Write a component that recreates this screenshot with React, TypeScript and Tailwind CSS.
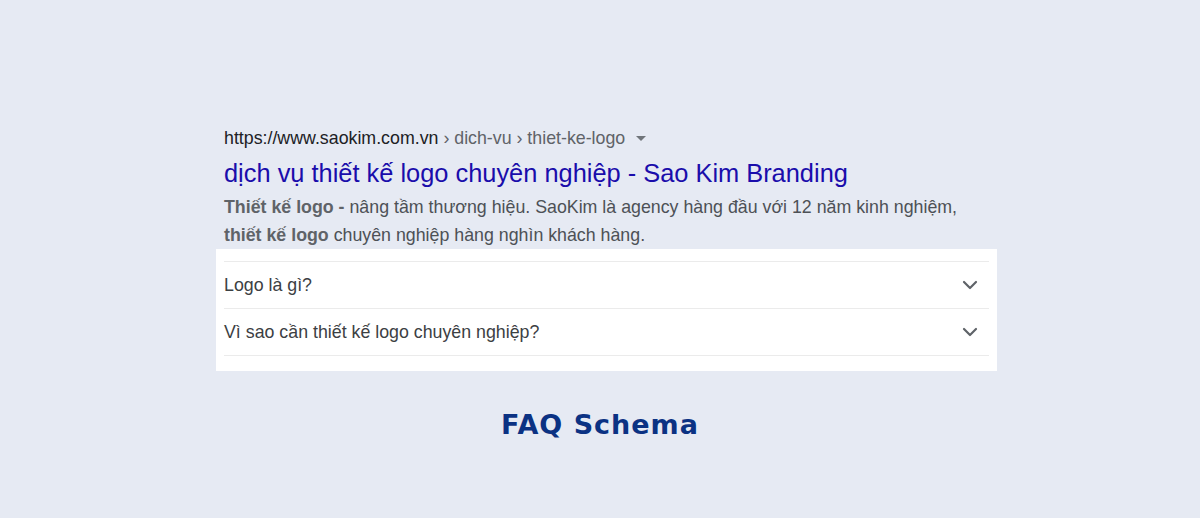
import { ChevronDown } from "lucide-react";

const faqs = ["Logo là gì?", "Vì sao cần thiết kế logo chuyên nghiệp?"];

export default function App() {
  return (
    <div className="flex h-[518px] w-[1200px] flex-col bg-[#e6eaf3] font-['Liberation_Sans',Arial,sans-serif]">
      <div className="ml-[216px] mt-[126px] w-[781px]">
        <div className="px-2">
          <div className="flex items-center text-[17.8px] leading-[24px]">
            <span className="text-[#202124]">https://www.saokim.com.vn</span>
            <span className="text-[#5f6368]">&nbsp;› dich-vu › thiet-ke-logo</span>
            <span className="ml-[11px] mt-[1px] h-0 w-0 border-x-[5px] border-t-[5px] border-x-transparent border-t-[#70757a]" />
          </div>
          <h3 className="mt-[7px] text-[25.4px] leading-[32px] text-[#1a0dab]">
            dịch vụ thiết kế logo chuyên nghiệp - Sao Kim Branding
          </h3>
          <p className="mt-[4px] text-[17.8px] leading-[28px] text-[#4d5156]">
            <b className="font-bold text-[#5f6368]">Thiết kế logo -</b> nâng tầm thương hiệu. SaoKim là agency hàng đầu với 12 năm kinh nghiệm,
            <br />
            <b className="font-bold text-[#5f6368]">thiết kế logo</b> chuyên nghiệp hàng nghìn khách hàng.
          </p>
        </div>
        <div className="bg-white px-2 pb-[15px] pt-3">
          <div className="border-t border-[#ebebeb]">
            {faqs.map((q) => (
              <div
                key={q}
                className="flex h-[47px] items-center justify-between border-b border-[#ebebeb] text-[17.8px] text-[#3c4043]"
              >
                <span>{q}</span>
                <ChevronDown className="mr-[7px] h-6 w-6 text-[#5f6368]" strokeWidth={2.2} />
              </div>
            ))}
          </div>
        </div>
      </div>
      <h2 className="mt-[37px] self-center font-['DejaVu_Sans',sans-serif] text-[27px] font-bold leading-[34px] tracking-[1px] text-[#0b3283]">
        FAQ Schema
      </h2>
    </div>
  );
}
